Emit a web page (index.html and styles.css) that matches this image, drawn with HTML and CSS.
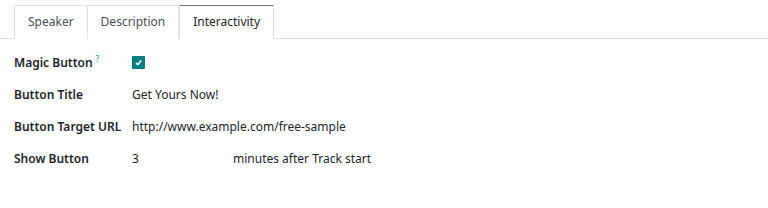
FILE: index.html
```html
<!DOCTYPE html>
<html lang="en">
<head>
  <meta charset="UTF-8">
  <title>Track - Interactivity</title>
  <link rel="stylesheet" href="styles.css">
</head>
<body>

  <!-- Notebook tabs -->
  <ul class="tabs">
    <li class="tab">Speaker</li>
    <li class="tab">Description</li>
    <li class="tab active">Interactivity</li>
  </ul>

  <!-- Interactivity page -->
  <div class="sheet">
    <div class="row">
      <div class="label">Magic Button<sup class="help">?</sup></div>
      <div class="value">
        <span class="check">
          <svg width="9" height="9" viewBox="0 0 10 10"><path d="M2 5.3 L4.2 7.3 L8 2.8" fill="none" stroke="#fff" stroke-width="1.8"/></svg>
        </span>
      </div>
    </div>
    <div class="row">
      <div class="label">Button Title</div>
      <div class="value">Get Yours Now!</div>
    </div>
    <div class="row">
      <div class="label">Button Target URL</div>
      <div class="value">http://www.example.com/free-sample</div>
    </div>
    <div class="row">
      <div class="label">Show Button</div>
      <div class="value">
        <span class="minutes">3</span>
        <span>minutes after Track start</span>
      </div>
    </div>
  </div>

</body>
</html>
```

FILE: styles.css
```css
body {
  margin: 0;
  background-color: #fff;
  font-family: "Noto Sans", "DejaVu Sans", sans-serif;
  font-size: 12px;
  color: #374151;
}
.tabs {
  display: flex;
  list-style: none;
  margin: 5px 0 0 0;
  padding: 0 0 0 14px;
  border-bottom: 1px solid #dee2e6;
}
.tab {
  padding: 7px 13px 8px;
  border: 1px solid #dee2e6;
  border-bottom: none;
  margin-bottom: -1px;
  color: #4a4f55;
  background-color: #fff;
}
.tab + .tab {
  border-left: none;
}
.tab.active {
  border-top: 1px solid #8a6a82;
  border-left: 1px solid #dee2e6;
  color: #212529;
  padding-bottom: 9px;
}
.sheet {
  padding: 7px 14px;
}
.row {
  display: flex;
  align-items: center;
  height: 32px;
}
.label {
  width: 118px;
  font-weight: 600;
  color: #212529;
}
.help {
  color: #0d8ca8;
  font-size: 8px;
  font-weight: normal;
  margin-left: 3px;
}
.value {
  display: flex;
  align-items: center;
  color: #212529;
}
.check {
  display: flex;
  align-items: center;
  justify-content: center;
  width: 13px;
  height: 13px;
  border-radius: 1px;
  background-color: #017e84;
}
.minutes {
  width: 101px;
}
```
